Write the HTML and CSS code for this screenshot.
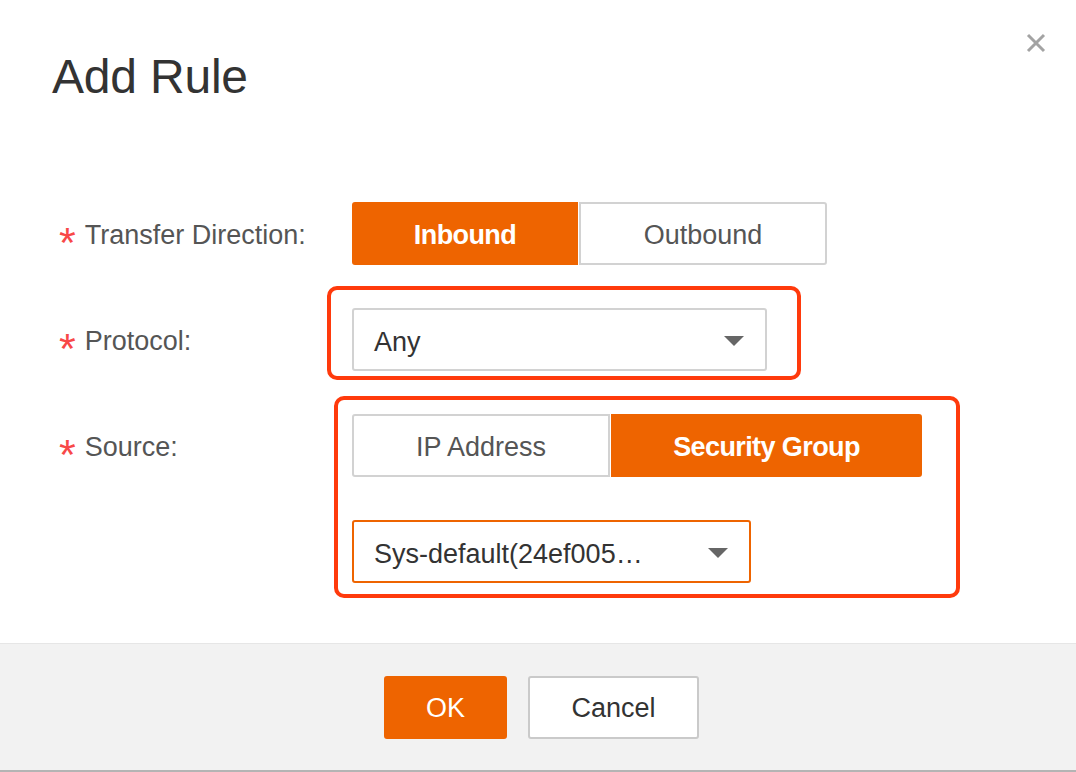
FILE: index.html
```html
<!DOCTYPE html>
<html lang="en">
<head>
<meta charset="utf-8">
<title>Add Rule</title>
<link rel="stylesheet" href="styles.css">
</head>
<body>
<div class="dialog">
  <button class="close" aria-label="Close">
    <svg width="20" height="20" viewBox="0 0 20 20"><path d="M2 2 L18 18 M18 2 L2 18" stroke="#a3a3a3" stroke-width="3" fill="none"/></svg>
  </button>
  <header class="header">
    <h1 class="title">Add Rule</h1>
  </header>
  <div class="form">
    <div class="row">
      <div class="label"><span class="req">*</span>Transfer Direction:</div>
      <div class="seg">
        <div class="seg-btn active w-in">Inbound</div>
        <div class="seg-btn w-out">Outbound</div>
      </div>
    </div>
    <div class="row">
      <div class="label"><span class="req">*</span>Protocol:</div>
      <div class="hl hl-protocol">
        <div class="select w-proto">
          <span class="value">Any</span>
          <span class="caret"></span>
        </div>
      </div>
    </div>
    <div class="row">
      <div class="label"><span class="req">*</span>Source:</div>
      <div class="hl hl-source">
        <div class="seg">
          <div class="seg-btn w-ip">IP Address</div>
          <div class="seg-btn active w-sg">Security Group</div>
        </div>
        <div class="select focused w-sys">
          <span class="value">Sys-default(24ef005…</span>
          <span class="caret"></span>
        </div>
      </div>
    </div>
  </div>
  <footer class="footer">
    <button class="btn btn-primary">OK</button>
    <button class="btn btn-default">Cancel</button>
  </footer>
</div>
</body>
</html>
```
FILE: styles.css
```css
* { box-sizing: border-box; }
html, body { margin: 0; padding: 0; }
body {
  font-family: "Liberation Sans", Arial, Helvetica, sans-serif;
  background: #fff;
  color: #333;
}
.dialog {
  position: relative;
  width: 1076px;
  height: 772px;
  display: flex;
  flex-direction: column;
  background: #fff;
}
.close {
  position: absolute;
  top: 33px;
  right: 30px;
  width: 20px;
  height: 20px;
  padding: 0;
  border: 0;
  background: transparent;
  display: flex;
}
.header {
  padding: 53px 0 0 52px;
}
.title {
  margin: 0;
  font-size: 48px;
  line-height: 48px;
  font-weight: normal;
  color: #333;
  letter-spacing: -0.2px;
}
.form {
  flex: 1;
  padding: 101px 0 0 60px;
  display: flex;
  flex-direction: column;
  gap: 43px;
}
.row {
  display: grid;
  grid-template-columns: 292px auto;
  align-items: start;
  justify-content: start;
}
.label {
  height: 63px;
  padding-top: 2px;
  line-height: 63px;
  font-size: 27px;
  color: #555;
  white-space: nowrap;
}
.req {
  display: inline-block;
  color: #f84848;
  font-size: 43px;
  line-height: 0;
  vertical-align: -13px;
  margin-left: -1px;
  margin-right: 9px;
}
.seg {
  display: flex;
}
.seg-btn {
  height: 63px;
  line-height: 63px;
  text-align: center;
  font-size: 27px;
  color: #555;
  background: #fff;
  border: 2px solid #d2d2d2;
}
.seg-btn:first-child { border-radius: 3px 0 0 3px; }
.seg-btn:last-child { border-radius: 0 3px 3px 0; margin-left: 1px; }
.seg-btn.active {
  background: #ee6400;
  border-color: #ee6400;
  color: #fff;
  font-weight: bold;
  letter-spacing: -0.6px;
}
.w-in { width: 226px; }
.w-out { width: 248px; }
.w-ip { width: 258px; }
.w-sg { width: 311px; }
.hl {
  border: 4px solid #ff3a0c;
  border-radius: 10px;
}
.hl-protocol {
  margin: -22px -34px -9px -25px;
  padding: 18px 30px 5px 21px;
}
.hl-source {
  margin: -18px -38px -15px -18px;
  padding: 14px 34px 11px 14px;
  display: flex;
  flex-direction: column;
  gap: 43px;
}
.select {
  height: 63px;
  border: 2px solid #d2d2d2;
  border-radius: 3px;
  background: #fff;
  display: flex;
  align-items: center;
  justify-content: space-between;
  padding: 0 21px 0 20px;
  font-size: 27px;
  color: #333;
}
.select .value { padding-top: 5px; }
.select.focused { border-color: #ee6400; }
.w-proto { width: 415px; }
.w-sys { width: 399px; }
.caret {
  width: 0;
  height: 0;
  border-left: 10px solid transparent;
  border-right: 10px solid transparent;
  border-top: 10px solid #666;
  margin-top: 2px;
}
.footer {
  height: 129px;
  background: #f2f2f2;
  border-top: 1px solid #e6e6e6;
  border-bottom: 2px solid #b4b4b4;
  display: flex;
  align-items: center;
  justify-content: center;
  gap: 21px;
  padding-left: 7px;
}
.btn {
  height: 63px;
  font-family: inherit;
  font-size: 27px;
  border-radius: 3px;
  padding: 3px 0 0;
}
.btn-primary {
  width: 123px;
  background: #ee6400;
  border: 2px solid #ee6400;
  color: #fff;
}
.btn-default {
  width: 171px;
  background: #fff;
  border: 2px solid #cacaca;
  color: #333;
}
```
